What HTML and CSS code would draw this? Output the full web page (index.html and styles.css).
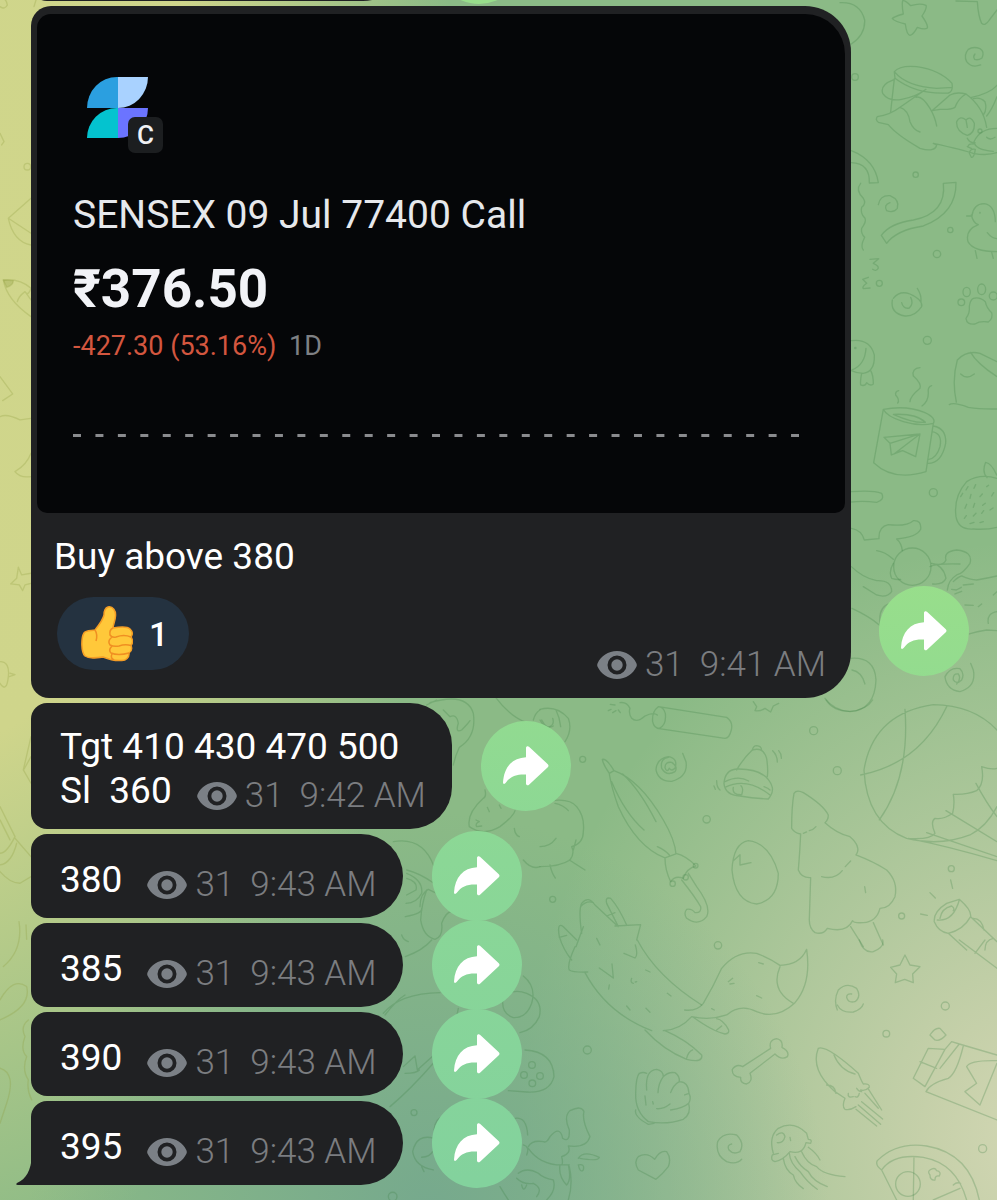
FILE: index.html
```
<!DOCTYPE html>
<html lang="en">
<head>
    <meta charset="UTF-8">
    <meta name="viewport" content="width=device-width, initial-scale=1.0">
    <title>Channel</title>
    <link rel="stylesheet" href="styles.css">
</head>
<body>
    <!-- wallpaper doodles -->
    <svg class="wallpaper" viewBox="0 0 997 1200" preserveAspectRatio="xMaxYMin slice" aria-hidden="true">
        <!-- top right: star, jar, cat, ribbons, duck -->
        <g transform="translate(840 0) scale(.3333)">
            <path d="M0 8Q60 5 74 60Q76 105 34 132M188 2Q195 0 212 17Q240 8 258 16Q262 24 246 48Q265 75 262 84Q255 90 232 82Q220 104 210 106Q200 104 196 72Q165 65 157 56Q160 50 190 42Q185 15 188 2ZM348 3L412 5Q415 50 425 70Q435 80 448 60L471 30"/>
            <path d="M404 178Q414 182 426 174Q435 155 420 146Q400 138 385 148Q370 165 380 185Q395 205 422 195M404 178Q398 170 405 162"/>
            <path d="M163 215Q180 195 230 200Q300 210 336 250Q340 275 325 279Q230 285 165 235ZM163 215Q200 260 290 265L336 262M163 236L152 335M160 240Q120 255 128 280Q145 305 185 298Q230 290 258 268L180 322Q150 345 112 350Q105 360 115 367L145 374Q170 405 240 445Q285 458 290 435L280 430Q370 450 400 460Q440 468 471 458M180 322Q205 330 210 365Q220 390 240 396M228 292Q245 285 270 325Q285 350 290 378M276 332L330 285Q350 275 378 282Q355 295 345 322Q330 330 300 328L276 332M378 282Q430 320 440 382M400 296Q420 290 435 305Q442 330 430 345M395 292Q450 280 471 256M440 348Q455 330 471 290M382 406Q348 395 350 365Q360 345 378 360Q392 345 403 370Q405 400 382 406ZM378 360L382 382M471 385Q420 385 402 425Q405 450 460 454M440 412Q450 422 465 412M382 415Q390 430 405 428M384 440Q385 430 400 432M388 460Q390 445 406 448Q402 475 394 472ZM382 440L395 446"/>
            <path d="M34 452Q105 480 115 548L88 549Q90 490 34 488M62 550Q45 570 70 595Q80 610 65 622Q60 640 75 655Q80 665 65 685Q62 700 74 712Q60 740 70 750M115 614Q120 585 150 587Q180 600 172 625Q160 640 140 632Q130 615 150 608M310 550L348 547Q350 640 250 678Q170 690 140 730L124 706Q150 670 220 660Q320 640 310 550Z"/>
            <path d="M380 648L396 648Q400 612 432 611Q465 615 466 665M394 645Q400 670 415 674Q375 690 384 725Q400 755 471 755M442 698Q455 715 471 716M406 752L411 775M455 757L460 775M90 778L116 776L100 790Q118 798 114 806Q108 815 98 808M85 832L68 838L80 850Q65 860 70 866L90 864"/>
            <ellipse cx="45" cy="231" rx="10" ry="10"/><circle cx="227" cy="524" r="8"/><circle cx="331" cy="690" r="8"/><circle cx="291" cy="762" r="11"/><circle cx="118" cy="850" r="9"/><circle cx="420" cy="638" r="1"/><circle cx="420" cy="393" r="6"/>
            <ellipse cx="380" cy="876" rx="11" ry="14"/><ellipse cx="425" cy="868" rx="12" ry="16"/><ellipse cx="460" cy="888" rx="12" ry="12"/>
        </g>
        <!-- right: mug, strawberry, monkey -->
        <g transform="translate(840 300) scale(.3333)">
            <path d="M160 -5Q180 -30 210 -18Q250 0 245 20Q225 50 195 48Q150 40 157 0M185 8Q190 28 208 24Q222 10 212 -8M232 -35Q245 -15 243 5M400 -5Q420 -10 436 5Q440 25 455 38Q460 55 445 66Q420 62 405 72Q380 75 378 55Q390 40 388 20Q390 0 400 -5"/>
            <path d="M34 122Q90 115 103 165Q105 215 70 220Q50 220 34 212M78 145Q75 195 36 210M65 220Q60 245 62 255Q75 260 80 248Q90 260 100 252Q100 225 92 212"/>
            <path d="M130 328Q200 315 255 338Q290 355 280 370Q240 380 190 365Q140 350 130 328L101 488Q160 545 258 515L280 370M160 343Q220 370 256 367Q230 340 160 343ZM280 378Q320 385 317 430Q305 490 264 490M276 395Q308 400 300 440Q290 475 266 478M132 412L240 402L227 470L188 452L154 465L150 430ZM240 402L150 430M240 402L162 462M175 455L188 452M240 203Q215 205 220 228Q245 250 240 265Q210 290 210 305M275 257Q262 260 265 280Q265 305 246 318M176 272Q165 275 167 285Q180 300 173 309"/>
            <path d="M328 314Q340 305 385 322Q420 328 471 327M349 306Q335 240 352 180Q380 150 420 160L471 185M392 157Q410 190 471 230M362 222Q380 240 403 222M437 487Q425 515 441 533M437 487Q455 490 470 525M471 535Q420 520 380 545Q340 590 348 650Q355 690 400 687Q440 690 471 682"/>
            <path d="M378 570l6 -10M402 565l5 -11M440 560l6 -4M362 590l6 -10M390 595l3 -12M420 590l7 -8M455 588l6 -10M375 625l5 -12M400 622l4 -12M428 616l8 -6M373 655l6 -8M400 648l8 -8M425 640l6 -8M450 630l9 -6M390 671l12 -4M420 668l10 -3"/>
            <path d="M34 575Q100 570 125 580Q135 600 110 607Q70 602 34 606M34 685Q65 690 73 720L117 716Q115 680 145 674Q200 680 220 662Q245 660 242 688Q230 712 170 717Q185 730 187 752M110 752Q135 755 160 778M34 800Q70 835 110 842Q155 840 155 875Q140 895 110 885L70 860M160 790Q145 815 155 835Q170 840 182 838M275 790Q310 795 318 835Q310 855 278 852M270 800Q285 790 360 792M275 790Q310 800 318 780Q310 755 350 750Q400 755 390 790Q370 820 350 825Q325 840 322 870M340 845Q355 830 365 828Q390 840 410 840Q440 835 471 828M335 868l14 2l15 -8M345 882l20 -8M370 855L400 852"/>
            <circle cx="217" cy="800" r="56"/><circle cx="262" cy="121" r="12"/><circle cx="280" cy="578" r="12"/><circle cx="364" cy="7" r="10"/><circle cx="46" cy="144" r="2"/>
        </g>
        <!-- cat face and spiral next to the first share button -->
        <g transform="translate(560 480) scale(.3333)">
            <path d="M876 385Q930 410 958 435M960 430Q955 380 990 370M1228 462Q1250 455 1280 450L1311 452M1215 375L1240 376M1255 380L1265 372M1300 345L1311 335M1285 430Q1280 400 1311 395M1190 612Q1205 595 1195 582Q1178 580 1180 600Q1190 615 1205 600Q1215 580 1200 566Q1170 560 1155 590Q1160 630 1200 635Q1250 620 1240 570L1232 550"/>
            <path d="M873 535Q945 530 948 600Q945 690 870 695Q820 690 795 655M876 570Q905 575 915 612"/>
        </g>
        <!-- middle right: firework, bell, umbrella, tree, ball -->
        <g transform="translate(540 700) scale(.3333)">
            <path d="M355 20L560 52Q580 65 574 90Q568 115 555 115L352 85M355 20Q335 35 338 65Q342 85 358 85Q380 75 376 40Q370 20 355 20M352 45Q340 35 315 48Q290 70 275 55Q265 40 270 25Q260 5 240 8M218 38l10 -6M225 15l-14 -2M235 30l6 8M205 32l8 -4M640 5L650 20L645 32Q660 35 675 25L692 36L700 18L716 10M858 0Q880 35 930 34Q980 30 998 0"/>
            <path d="M0 28Q50 15 85 55Q98 90 75 125M48 30Q60 55 62 80M0 60Q10 80 25 82Q45 75 38 55M35 302Q90 295 110 320Q135 350 130 395Q130 430 95 440Q105 460 90 480Q60 500 0 500M45 310Q70 315 85 332M0 440Q30 440 48 415M30 495Q35 520 46 534M88 480L135 510M100 450L108 420"/>
            <path d="M388 205Q380 220 375 203Q375 185 395 187Q415 200 405 215Q380 230 365 205Q360 175 385 172M388 205Q395 215 405 205Q415 175 385 170Q350 175 348 210Q355 245 395 244Q445 230 438 185L428 160"/>
            <path d="M637 150Q640 137 650 137Q665 138 665 152M637 150Q670 140 680 175Q685 210 682 230M637 150Q610 175 590 210M590 207Q555 210 552 250Q555 285 600 288Q640 295 685 297Q700 280 697 262Q680 205 590 207M555 245Q595 225 626 243M555 262Q620 230 690 285M580 262Q575 285 605 284Q612 265 603 257M672 260Q685 265 690 270M698 152Q712 165 712 186M716 152Q725 162 724 175M530 242Q530 262 540 270M522 258L526 268"/>
            <path d="M187 178Q200 175 222 212L208 220Q190 195 187 178ZM222 212Q300 240 370 360Q405 420 408 462L375 474Q290 440 235 320Q215 265 208 222M248 222Q300 270 348 365M215 245Q255 340 312 390M352 440Q375 450 388 465M375 474Q375 510 392 545Q405 525 430 535Q440 505 468 498Q440 468 408 460M425 540Q465 590 482 620Q485 640 465 638Q455 625 440 628Q430 640 440 655Q475 680 500 650Q515 620 470 560L445 520"/>
            <path d="M625 422Q690 430 715 520Q715 600 650 612Q585 605 576 510Q580 430 625 422ZM580 482L600 464L600 495L633 488"/>
            <path d="M782 402Q765 400 755 385Q755 320 762 280Q770 268 790 278Q850 315 865 345Q865 360 855 368Q890 400 930 410Q965 440 948 465Q1000 485 1040 510Q1075 545 1065 590Q1050 625 1020 625Q1010 665 970 668Q940 670 938 662Q920 700 862 685Q850 705 825 698Q808 685 808 660L812 533Q785 535 775 510Q780 450 782 402M790 400L800 396M808 392Q820 390 828 380M845 530Q885 540 907 512M916 500L932 483M974 560L977 578M932 680L970 740M1000 668L1030 735"/>
            <path d="M1371 90Q1300 15 1180 14Q1000 40 972 210Q980 370 1100 415Q1200 440 1290 405Q1340 380 1371 320M1095 28Q1110 230 1018 360M1220 20Q1140 190 962 225M1160 398L1371 470M1105 415Q1230 440 1371 482M1218 332L1371 425M1308 250Q1340 310 1371 350M1105 415Q1170 420 1185 400Q1170 365 1185 355Q1210 360 1238 340Q1245 310 1240 283Q1280 285 1310 272Q1335 250 1325 200Q1355 210 1371 205"/>
            <path d="M1183 665Q1180 635 1220 610L1258 598Q1295 630 1292 650Q1270 690 1225 700Q1195 695 1183 665ZM1192 660Q1240 665 1258 600M1200 655Q1205 625 1235 618Q1245 625 1240 632M1292 650L1371 725M1225 700L1280 750M1300 655Q1325 655 1332 690M1335 750Q1335 720 1360 715M1232 540L1238 565M1170 578L1186 594M1142 642L1162 646"/>
            <circle cx="821" cy="92" r="12"/><circle cx="892" cy="212" r="12"/><circle cx="128" cy="178" r="9"/><circle cx="500" cy="358" r="11"/><circle cx="38" cy="598" r="9"/><circle cx="1234" cy="506" r="9"/><circle cx="1085" cy="648" r="9"/><circle cx="467" cy="497" r="7"/><circle cx="398" cy="551" r="8"/><circle cx="437" cy="532" r="8"/>
        </g>
        <!-- bottom right: fox, bone, squid, shell, jellyfish, pizza -->
        <g transform="translate(540 940) scale(.3333)">
            <path d="M125 -20Q115 -90 125 -110Q145 -135 165 -105L235 -40M122 -100Q140 -120 160 -112M108 20L130 -40M110 0L70 -40Q50 -55 58 -10Q70 30 95 60M58 -8L80 -14M235 -40L200 -110Q195 -130 212 -125Q235 -100 260 -45M200 -72L225 -82M225 -42L302 -46L290 0M170 -5L180 15M105 20Q80 75 88 90Q100 98 143 96M135 98Q200 220 335 272M292 0Q350 110 485 195M178 84L220 114L216 72M252 40L285 54Q295 45 286 15M275 115Q270 128 280 130M208 135L206 147M317 90L330 96M382 160L393 168M260 198L270 210M318 205L330 217M290 125l-4 1"/>
            <path d="M434 210Q470 215 490 190Q520 140 545 85Q590 30 650 40Q690 55 720 76Q780 75 800 28Q815 130 765 188Q710 240 650 215Q600 190 560 225Q510 242 455 230Q420 270 370 272M720 80Q690 150 760 190M656 68L670 72M565 125L578 115M570 132L582 130M650 167L665 174M515 206L523 210M315 270Q370 330 440 358Q490 370 485 345Q440 300 375 272M440 355Q445 335 458 330M460 232Q520 275 555 282Q570 280 565 268Q550 240 530 236M530 270L545 258"/>
            <path d="M608 380L692 325Q685 300 710 296Q730 300 726 322Q750 335 742 350Q725 362 705 342L630 400Q640 425 620 432Q600 430 602 412Q575 410 577 388Q590 370 608 380Z"/>
            <path d="M320 450Q315 390 350 388Q370 392 370 410Q385 395 405 398Q420 408 418 425Q445 425 447 460Q455 475 446 490Q455 520 430 538Q380 555 325 545Q285 515 287 460Q288 410 298 400Q310 395 320 400M370 410Q355 430 354 458M418 425Q400 435 392 458M447 460L434 465M446 490Q430 505 392 510M390 492Q370 508 350 506M315 468L318 495M338 485L340 492M287 510Q282 530 325 553L342 550"/>
            <path d="M835 325Q860 315 955 400Q965 425 970 432Q990 430 988 442Q975 455 962 450M835 325Q810 390 885 455L915 475Q905 500 915 508Q930 512 948 500M882 345Q900 390 945 402M860 435Q885 435 888 460M925 460Q922 475 940 470M950 445Q955 455 965 455M945 470Q955 475 958 460M948 508L1010 558M955 495L1022 553M965 485L1028 537M975 460L1015 505M984 445L1025 510"/>
            <path d="M892 210Q880 180 895 150Q920 125 950 145Q965 170 945 185Q925 190 920 172Q920 160 935 162M892 195Q905 220 940 216Q965 208 970 192M605 658Q590 675 560 665Q525 645 533 605Q550 575 590 585Q615 610 600 635Q580 645 567 630Q560 615 575 612"/>
            <path d="M1095 45L1110 75L1140 80L1118 102L1120 128L1094 118L1066 128L1070 102L1052 82L1080 75ZM348 718L295 690Q280 665 295 650Q320 635 344 658Q360 630 380 635Q395 655 385 680Q370 700 348 718Z"/>
            <path d="M700 640Q685 590 715 565Q760 540 800 580L805 598Q818 598 812 610L798 608Q790 645 750 635Q730 660 705 665Q690 660 697 645L715 640M710 585Q730 570 735 590Q730 610 712 608M750 592L752 602M730 655Q735 690 760 705Q765 730 790 746M748 640Q750 670 780 695Q800 725 832 748M765 650Q780 680 805 695Q820 725 862 740M785 635Q800 670 830 680Q850 705 915 710M805 622Q830 640 840 660"/>
            <path d="M1025 690Q1005 675 1012 662Q1070 605 1160 618Q1290 640 1318 780M1025 690Q1060 640 1150 652Q1250 670 1280 780M1025 690L1070 780M1122 652L1120 780M1260 745L1180 780M1240 735Q1250 725 1262 730M1170 690Q1185 680 1190 692Q1205 695 1198 708Q1185 705 1185 720Q1170 722 1170 705Q1162 695 1170 690"/>
            <path d="M1120 415L1165 325L1215 328L1155 440ZM1140 365L1190 385M1215 328L1235 305L1258 312L1200 385M1258 312L1371 345M1270 318Q1250 400 1225 415Q1170 430 1158 455L1371 540M1280 380Q1290 360 1371 362M1280 380L1310 430L1275 455L1320 495L1371 370M1170 285Q1185 262 1200 265L1218 285Q1200 305 1185 300ZM958 0Q970 40 1000 35Q1035 20 1028 0M1258 0L1371 85M1305 40L1335 0"/>
            <circle cx="534" cy="16" r="11"/><circle cx="142" cy="330" r="12"/><circle cx="1216" cy="198" r="12"/><circle cx="1039" cy="281" r="10"/><circle cx="1328" cy="626" r="12"/><circle cx="1104" cy="732" r="37"/>
        </g>
        <!-- behind the share buttons: sheep, ufo, gamepad, fish -->
        <g transform="translate(380 690) scale(.3333)">
            <path d="M150 38Q260 5 280 70Q290 140 238 172Q225 200 220 225M190 60L210 80Q230 70 235 100Q225 130 245 120Q265 100 270 92M140 45L170 30M345 20Q390 80 440 98M460 90Q466 68 480 60M485 90Q500 120 520 108M315 300Q320 320 310 325Q260 370 268 410Q310 440 360 410Q400 380 405 362M322 352L328 365M358 345L363 355M288 390L298 395Q285 400 290 410L305 408M480 530Q455 540 430 510M403 415Q405 435 418 440"/>
            <path d="M40 455Q130 440 162 530M80 540Q120 550 162 580M80 550Q130 570 125 610Q110 640 78 640M80 565Q115 575 108 600L80 615M76 680Q130 670 125 655M120 650Q120 610 145 598L170 610M140 600Q125 640 122 690Q130 740 165 748Q190 740 185 700Q200 660 220 665M65 735Q70 750 85 755M76 800Q130 780 155 750M10 970Q60 910 180 908M15 975Q50 930 75 915M235 955L230 980M430 858Q470 890 455 940Q440 985 400 983Q360 970 370 920Q400 895 440 910Q490 930 478 980Q460 1020 420 1028M435 1080Q520 1085 522 1160Q510 1210 440 1206L385 1202"/>
            <path d="M70 1130L105 1098L112 1140L162 1095M75 1150Q110 1150 118 1140M30 1250Q90 1200 160 1120M162 1345Q110 1330 98 1385Q105 1430 160 1440M125 1430L132 1445M125 1402Q150 1400 158 1385M162 1320Q165 1285 190 1280M405 1285Q440 1280 443 1335M430 1365Q450 1370 440 1395M445 1370Q455 1350 490 1355Q500 1360 510 1340Q540 1305 548 1345Q570 1360 568 1320Q550 1280 570 1262Q605 1245 612 1265Q605 1290 630 1340Q620 1375 565 1368Q575 1390 545 1400Q550 1420 545 1425Q480 1425 445 1375M545 1425L568 1425M540 1425Q535 1460 560 1485Q575 1470 565 1425M568 1430Q580 1480 565 1530M595 1405Q610 1380 658 1402Q655 1415 600 1405M595 1425Q615 1420 610 1440Q600 1450 595 1425M360 1490Q375 1515 385 1530M415 1450Q440 1430 475 1450Q490 1465 520 1470Q530 1500 500 1530M410 1465Q430 1485 460 1480Q490 1495 470 1520M425 1485Q430 1510 440 1485"/>
            <circle cx="102" cy="1268" r="9"/><circle cx="38" cy="1520" r="13"/><circle cx="456" cy="1125" r="10"/><circle cx="432" cy="1155" r="10"/><circle cx="480" cy="1158" r="10"/><circle cx="457" cy="1180" r="10"/>
        </g>
        <!-- left strip -->
        <g class="left" transform="scale(.3333)">
            <path d="M0 20Q15 30 22 15Q20 0 10 -5M0 400L12 425L5 435M93 595L25 655Q40 725 93 735M25 655L93 700M10 840Q60 835 93 865M10 840Q20 900 93 950M93 865Q85 890 75 875Q55 890 52 905M75 875L93 900M0 1130L38 1182L8 1202M0 1250Q20 1240 60 1260L93 1255M93 1360Q80 1395 45 1415Q60 1435 93 1430M102 20L108 0"/>
            <path d="M55 1702L65 1725L93 1720M55 1702L50 1735L32 1752L58 1755L68 1772L75 1755L93 1750M0 1985Q30 1985 25 2030Q20 2080 0 2050M30 2020L45 2024L28 2030M93 2210L70 2310L93 2350M72 2308L93 2270M0 2420L45 2510Q20 2560 0 2560M0 2460L30 2520M45 2515L93 2570M50 2530Q35 2590 0 2595M0 2615Q30 2650 60 2650L93 2630M57 2765Q70 2850 10 2900M78 2775L80 2818M0 3000Q40 2930 80 2960Q95 3020 0 3060M85 3060Q60 3080 75 3110Q60 3150 80 3170Q65 3210 85 3240Q80 3270 95 3300M0 3205Q50 3220 20 3310L0 3370"/>
            <circle cx="82" cy="500" r="10"/>
            <path class="nib" d="M10 840L40 842Q40 855 20 862Z"/>
        </g>
    </svg>

    <!-- shared icons -->
    <svg class="sprite" aria-hidden="true">
        <symbol id="eye" viewBox="0 0 40 28">
            <path fill="currentColor" fill-rule="evenodd" d="M20 0C29 0 36 5 39.400 12.200Q40.200 14 39.400 15.800C36 23 29 28 20 28S4 23 .6 15.800Q-.2 14 .6 12.200C4 5 11 0 20 0ZM20 4.500A9.500 9.500 0 1 0 20 23.500A9.500 9.500 0 1 0 20 4.500Z"/>
            <circle fill="currentColor" cx="20" cy="14" r="5.700"/>
        </symbol>
        <symbol id="share" viewBox="0 0 46 40">
            <path fill="#fff" d="M23 2C23 .2 24.800 -.4 26 .7L44.800 18.200Q46.200 19.700 44.800 21.200L26 38.800C24.800 39.800 23 39.300 23 37.500V28.500C14 28 7.500 30 2.600 37Q.2 39.200 0 36.500C1 21 9 12 23 11.200Z"/>
        </symbol>
    </svg>

    <main class="chat">
        <div class="row cut">
            <div class="bubble"></div>
            <button class="share" aria-label="Share"><svg><use href="#share"/></svg></button>
        </div>

        <div class="row wide">
            <article class="bubble post">
                <section class="quote">
                    <div class="logo">
                        <svg viewBox="0 0 76 76" aria-hidden="true">
                            <path fill="#2b9fe0" d="M0 31A30 31 0 0 1 30 0H31V31Z"/>
                            <path fill="#a9d2ff" d="M31 0H61A30 31 0 0 1 31 31Z"/>
                            <path fill="#04c3cf" d="M0 61A30 30 0 0 1 30 31H31V61Z"/>
                            <path fill="#6b74ff" d="M31 31H61A30 30 0 0 1 31 61Z"/>
                            <rect fill="#1c1e20" x="41" y="40" width="35" height="36" rx="7"/>
                        </svg>
                        <span class="badge">C</span>
                    </div>
                    <h1>SENSEX 09 Jul 77400 Call</h1>
                    <p class="price">₹376.50</p>
                    <p class="change">-427.30 (53.16%) <span>1D</span></p>
                    <svg class="dashes" viewBox="0 0 727 3" preserveAspectRatio="none" aria-hidden="true"><path d="M0 1.500H727"/></svg>
                </section>
                <p class="text">Buy above 380</p>
                <div class="foot">
                    <button class="reaction" aria-label="Thumbs up, 1">
                        <svg viewBox="0 0 52 56" aria-hidden="true">
                            <path fill="#ffc83a" stroke="#f49d25" d="M27 1C32 0 35 5 34.500 10C34.300 15 32 19 32 22C38 21 46 20 49 23C52 26 51.500 29 50 31C52 34 52 37 50 39.500C51 42 51 45 48 47C48.500 51 45 55 40 54.500C33 55 27 53 22 51C15 52 8 53 4 50C0 46 0 32 3 27C5 24 11 25 14 24C18 19 22 14 23 9C23 5 24 2 27 1Z"/>
                            <path fill="none" stroke="#f08f22" d="M14 24Q17 29 15 35M32 22Q28 24 29 29Q31 32 35 31Q43 28 50 31M31 31Q26 35 29 39Q33 41 38 40Q44 38 50 39.500M31 40Q27 44 30 47Q37 50 48 47M31 48Q29 52 33 54"/>
                        </svg>
                        1
                    </button>
                    <div class="meta"><svg><use href="#eye"/></svg><span>31</span><time>9:41 AM</time></div>
                </div>
            </article>
            <button class="share" aria-label="Share"><svg><use href="#share"/></svg></button>
        </div>

        <div class="row">
            <article class="bubble two-line">
                <p class="text">Tgt 410 430 470 500</p>
                <div class="foot">
                    <p class="text">Sl&nbsp; 360</p>
                    <div class="meta"><svg><use href="#eye"/></svg><span>31</span><time>9:42 AM</time></div>
                </div>
            </article>
            <button class="share" aria-label="Share"><svg><use href="#share"/></svg></button>
        </div>

        <div class="row">
            <article class="bubble">
                <div class="foot">
                    <p class="text">380</p>
                    <div class="meta"><svg><use href="#eye"/></svg><span>31</span><time>9:43 AM</time></div>
                </div>
            </article>
            <button class="share" aria-label="Share"><svg><use href="#share"/></svg></button>
        </div>

        <div class="row">
            <article class="bubble">
                <div class="foot">
                    <p class="text">385</p>
                    <div class="meta"><svg><use href="#eye"/></svg><span>31</span><time>9:43 AM</time></div>
                </div>
            </article>
            <button class="share" aria-label="Share"><svg><use href="#share"/></svg></button>
        </div>

        <div class="row">
            <article class="bubble">
                <div class="foot">
                    <p class="text">390</p>
                    <div class="meta"><svg><use href="#eye"/></svg><span>31</span><time>9:43 AM</time></div>
                </div>
            </article>
            <button class="share" aria-label="Share"><svg><use href="#share"/></svg></button>
        </div>

        <div class="row">
            <article class="bubble last">
                <svg class="tail" viewBox="0 0 16 30" aria-hidden="true"><path d="M16 0C15 16 10 24 1 28Q-1 30 2 30H16Z"/></svg>
                <div class="foot">
                    <p class="text">395</p>
                    <div class="meta"><svg><use href="#eye"/></svg><span>31</span><time>9:43 AM</time></div>
                </div>
            </article>
            <button class="share" aria-label="Share"><svg><use href="#share"/></svg></button>
        </div>
    </main>
</body>
</html>
```
FILE: styles.css
```
* {
    box-sizing: border-box;
}

body {
    margin: 0;
    min-height: 100vh;
    overflow-x: hidden;
    font-family: Roboto, "Liberation Sans", sans-serif;
    color: #fff;
    background:
        radial-gradient(ellipse 400px 400px at 43% 101%, #76a98d 0%, rgba(118, 169, 141, 0) 100%),
        radial-gradient(ellipse 520px 600px at 104% 95%, #d3d7b4 0%, rgba(205, 211, 174, 0.9) 20%, rgba(205, 211, 174, 0) 100%),
        radial-gradient(ellipse 520px 1060px at -6% 18%, #d0d68b 0%, #cfd58b 50%, rgba(207, 213, 139, 0) 100%),
        #8bba86;
}

h1,
p {
    margin: 0;
}

button {
    border: 0;
    padding: 0;
    font: inherit;
    color: inherit;
    cursor: pointer;
}

.sprite {
    display: none;
}

.wallpaper {
    position: absolute;
    top: 0;
    left: 0;
    width: 100%;
    height: 1200px;
    z-index: -1;
    fill: none;
    stroke: #3f8048;
    stroke-opacity: 0.27;
    stroke-width: 4;
    stroke-linecap: round;
    stroke-linejoin: round;
}

.wallpaper .left {
    stroke: #8c9a3c;
}

.wallpaper .nib {
    fill: #8c9a3c;
    fill-opacity: 0.3;
}

.chat {
    display: flex;
    flex-direction: column;
    gap: 5px;
    padding: 0 28px 7px 31px;
    overflow: hidden;
}

/* message + share button */
.row {
    display: flex;
    align-items: center;
    gap: 29px;
}

.row.cut {
    margin-top: -83px;
}

.row.cut .bubble {
    width: 374px;
    height: 84px;
}

.row.wide {
    align-items: flex-end;
    gap: 28px;
}

.bubble {
    position: relative;
    padding: 24px 26px 11px 29px;
    background: #202123;
    border-radius: 16px 42px 42px 16px;
}

.bubble.two-line {
    padding-top: 22px;
}

.bubble.last {
    border-bottom-left-radius: 0;
}

.bubble.post {
    flex: 1;
    padding: 8px 6px 11px;
    border-radius: 20px 46px 46px 18px;
}

.text {
    font-size: 37px;
    line-height: 44px;
}

.foot {
    display: flex;
    justify-content: space-between;
    align-items: flex-end;
    gap: 25px;
}

.foot .text {
    margin-bottom: 5px;
}

.meta {
    display: flex;
    align-items: center;
    color: #7b7d80;
    font-size: 35px;
    font-weight: 300;
    line-height: 44px;
}

.meta svg {
    width: 40px;
    height: 28px;
    margin-right: 8px;
    color: #7b8086;
}

.meta time {
    margin-left: 16px;
}

.tail {
    position: absolute;
    left: -15px;
    bottom: 0;
    width: 16px;
    height: 30px;
    fill: #202123;
}

/* picture part of the post */
.quote {
    padding: 63px 46px 76px 36px;
    background: #050608;
    border-radius: 14px 40px 10px 10px;
}

.logo {
    position: relative;
    width: 76px;
    height: 76px;
    margin-left: 14px;
}

.logo svg {
    display: block;
}

.badge {
    position: absolute;
    right: 0;
    bottom: 0;
    width: 35px;
    font-size: 26px;
    font-weight: 500;
    line-height: 36px;
    text-align: center;
    color: #f0f1f4;
}

.quote h1 {
    margin-top: 38px;
    font-size: 39px;
    font-weight: 400;
    line-height: 48px;
    color: #e6e8ec;
}

.price {
    margin-top: 18px;
    font-size: 53px;
    font-weight: 700;
    line-height: 64px;
    color: #f2f3f7;
}

.change {
    margin-top: 7px;
    font-size: 27px;
    line-height: 36px;
    color: #d3563f;
}

.change span {
    margin-left: 6px;
    color: #7e8084;
}

.dashes {
    display: block;
    width: 100%;
    height: 3px;
    margin-top: 70px;
    stroke: #8a8b8e;
    stroke-width: 3;
    stroke-dasharray: 8 14.47;
}

.post > .text {
    margin: 22px 17px 18px;
}

.post .foot {
    padding: 0 19px 0 20px;
}

.reaction {
    display: flex;
    align-items: center;
    gap: 16px;
    height: 73px;
    margin-bottom: 17px;
    padding: 0 21px 0 24px;
    border-radius: 37px;
    background: #243240;
    font-size: 34px;
    font-weight: 500;
}

.reaction svg {
    width: 52px;
    height: 56px;
    stroke-width: 1.5;
}

.share {
    flex: none;
    display: flex;
    align-items: center;
    justify-content: center;
    width: 90px;
    height: 90px;
    margin: -3px 0;
    border-radius: 50%;
    background: linear-gradient(#98de8b 580px, #8bd796 860px, #83d29d 1180px) fixed;
}

.share svg {
    width: 46px;
    height: 40px;
}

.row.wide .share {
    margin-bottom: 22px;
}
```
